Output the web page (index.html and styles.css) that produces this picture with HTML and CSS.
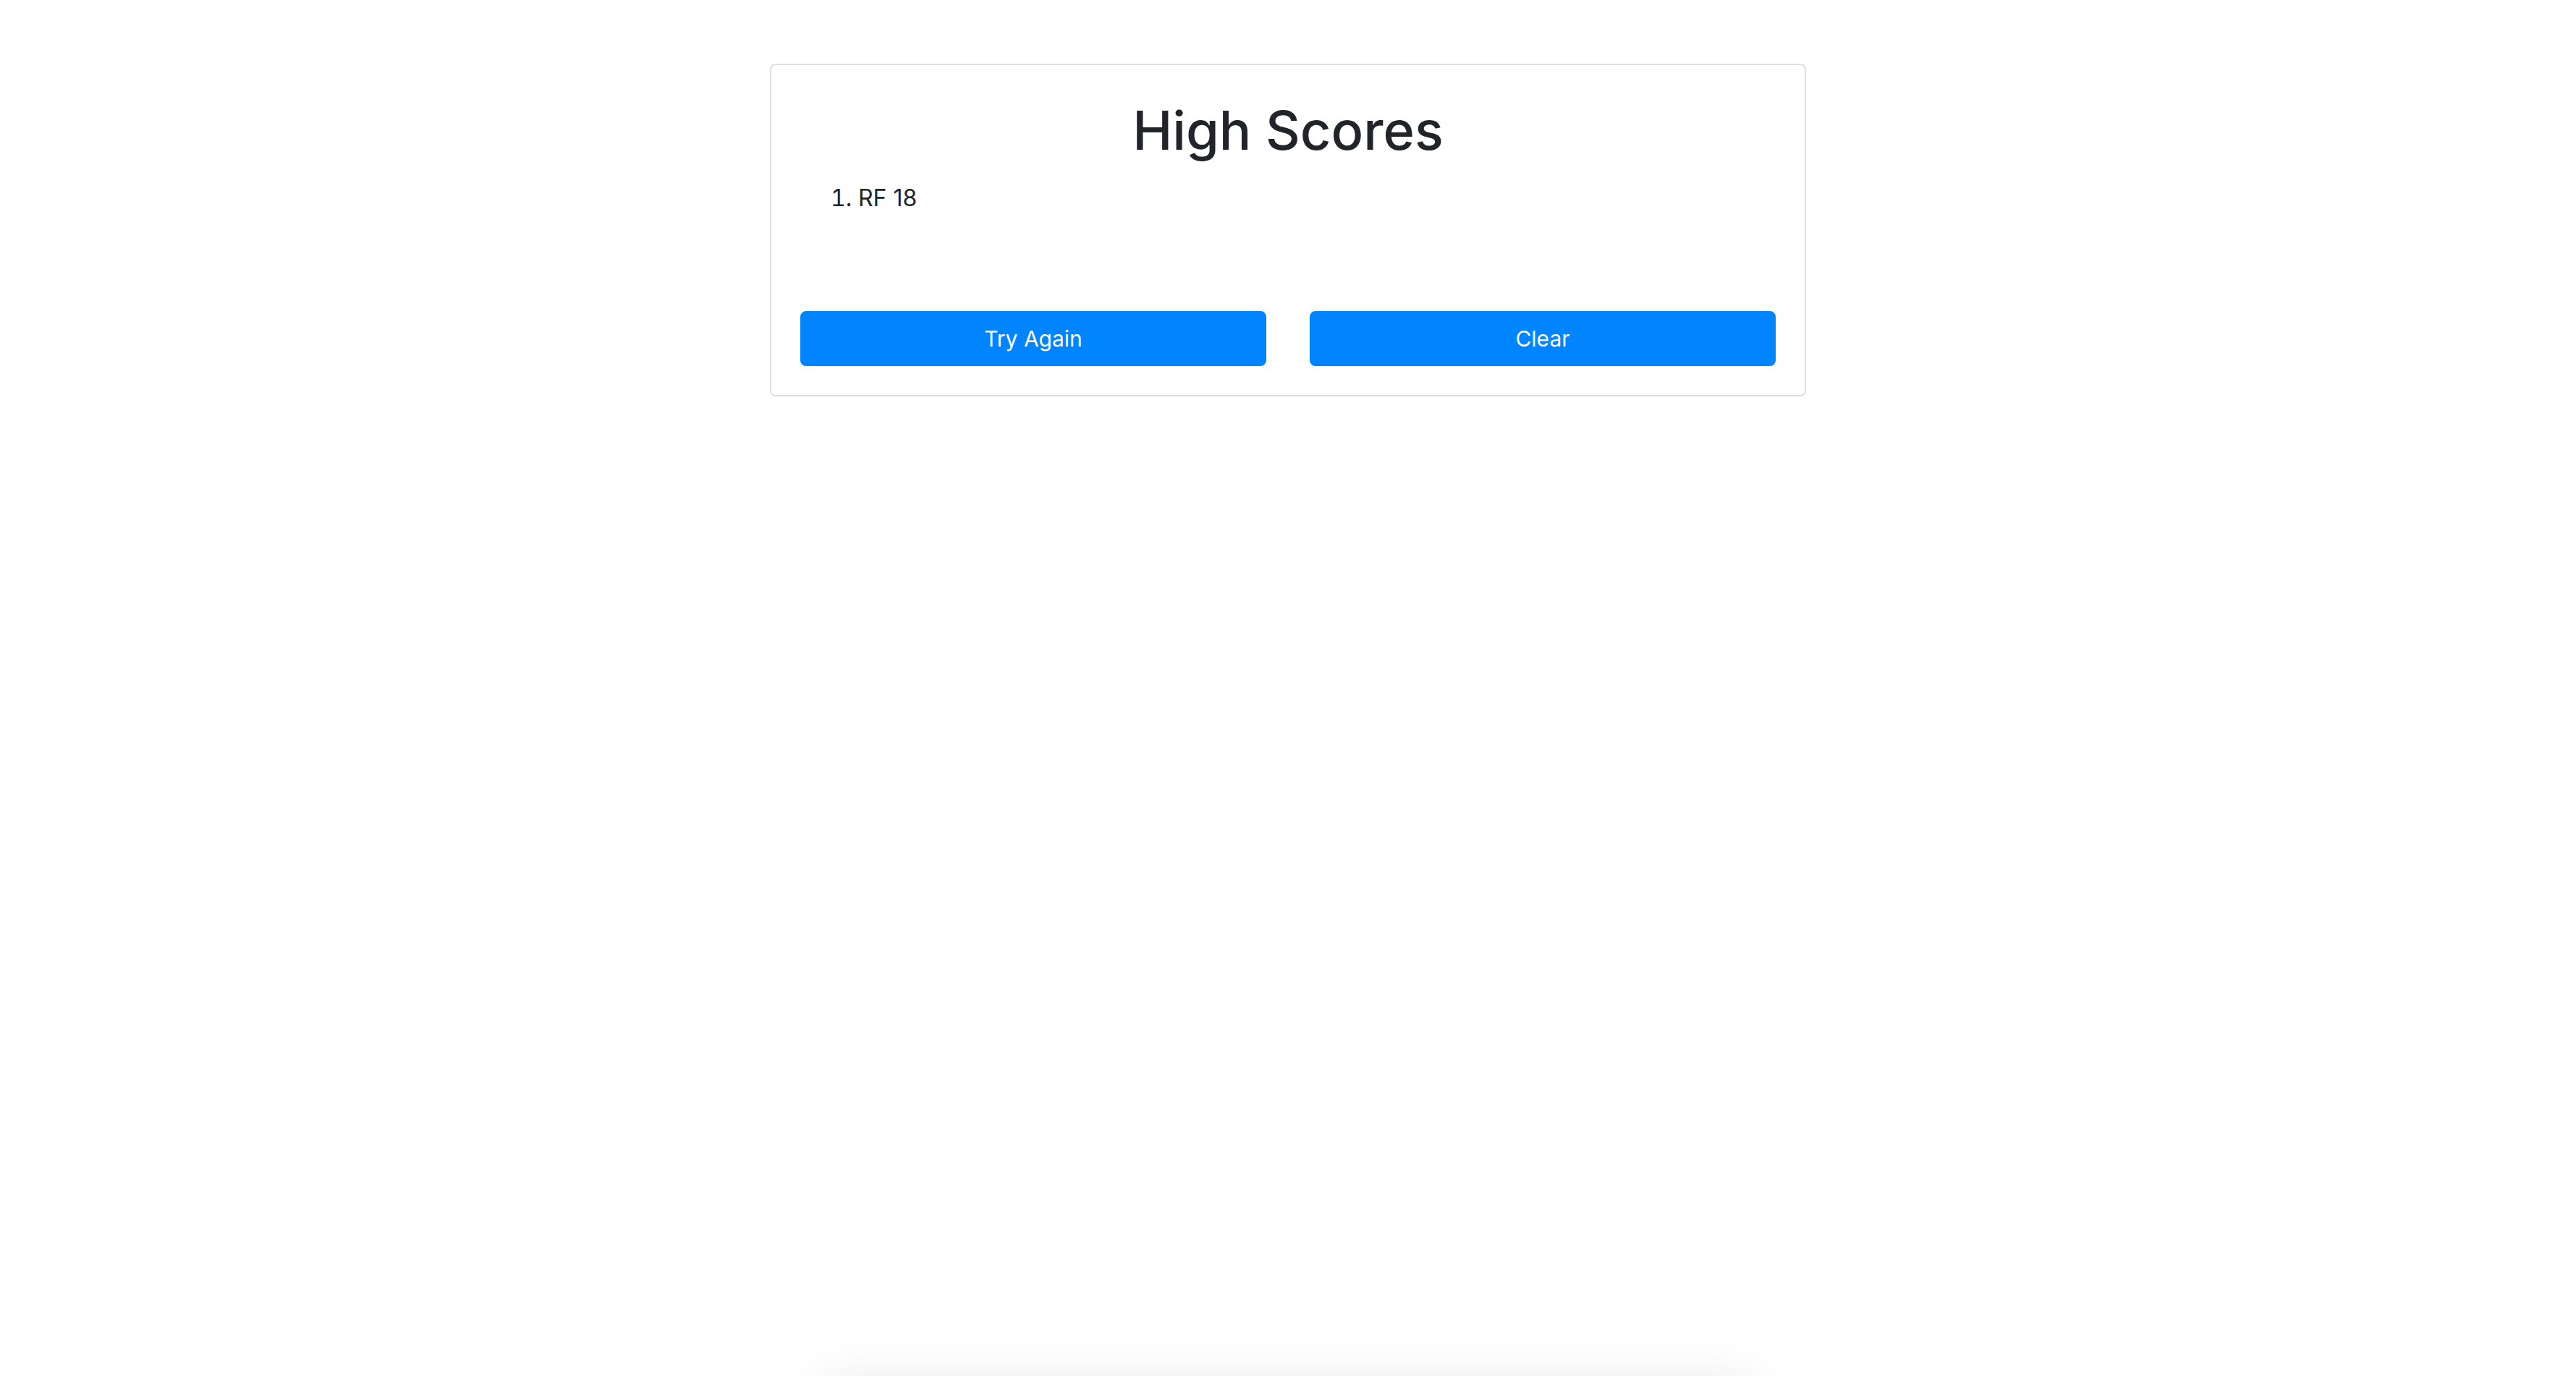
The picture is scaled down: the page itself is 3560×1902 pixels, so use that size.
FILE: index.html
```html
<!DOCTYPE html>
<html lang="en">
<head>
<meta charset="utf-8">
<title>High Scores</title>
<link rel="stylesheet" href="styles.css">
</head>
<body>
<main class="container">
  <section class="card">
    <h1 class="title">High Scores</h1>
    <ol class="scores">
      <li>RF 18</li>
    </ol>
    <div class="actions">
      <button class="btn" type="button">Try Again</button>
      <button class="btn" type="button">Clear</button>
    </div>
  </section>
</main>
<div class="page-shadow"></div>
</body>
</html>
```
FILE: styles.css
```css
* { box-sizing: border-box; }
body {
  margin: 0;
  min-height: 100vh;
  display: flex;
  flex-direction: column;
  overflow: hidden;
  background: #fff;
  color: #212529;
  font-family: Inter, "Liberation Sans", sans-serif;
  font-size: 32px;
  line-height: 48px;
}
.container {
  width: 100%;
  max-width: 1432px;
  margin: 0 auto;
  padding-top: 88px;
  flex: 1;
}
.card {
  padding: 40px;
  border: 2px solid #dfdfdf;
  border-radius: 8px;
}
.title {
  margin: 0 0 20px;
  font-size: 74px;
  line-height: 100px;
  font-weight: 500;
  text-align: center;
}
.scores {
  margin: 0 0 32px;
  padding-left: 80px;
}
.actions {
  display: grid;
  grid-template-columns: 1fr 1fr;
  gap: 60px;
  padding-top: 100px;
}
.btn {
  padding: 12px 24px;
  border: 2px solid #0084ff;
  border-radius: 8px;
  background: #0084ff;
  color: #fff;
  font: inherit;
  font-size: 30px;
}
.page-shadow {
  width: 36%;
  height: 60px;
  margin: 0 auto -60px;
  box-shadow: 0 12px 72px rgba(0, 0, 0, 0.11);
}
```
